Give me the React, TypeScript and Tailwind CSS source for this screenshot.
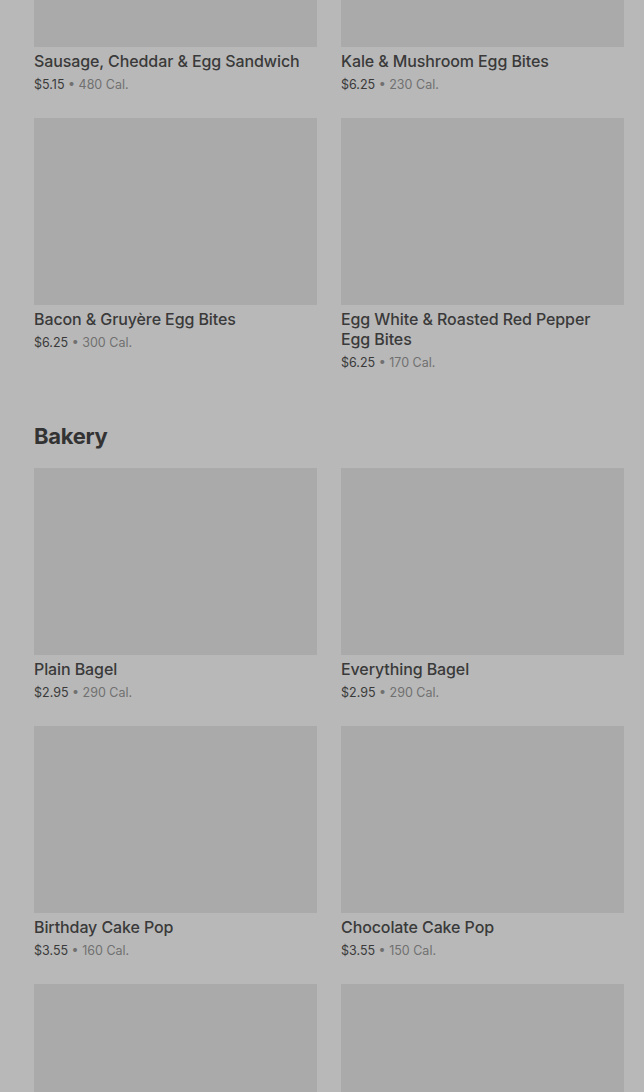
import React from "react";

type Item = { name: string; price: string; cal: string };

const breakfast: Item[] = [
  { name: "Sausage, Cheddar & Egg Sandwich", price: "$5.15", cal: "480 Cal." },
  { name: "Kale & Mushroom Egg Bites", price: "$6.25", cal: "230 Cal." },
  { name: "Bacon & Gruyère Egg Bites", price: "$6.25", cal: "300 Cal." },
  { name: "Egg White & Roasted Red Pepper Egg Bites", price: "$6.25", cal: "170 Cal." },
];

const bakery: Item[] = [
  { name: "Plain Bagel", price: "$2.95", cal: "290 Cal." },
  { name: "Everything Bagel", price: "$2.95", cal: "290 Cal." },
  { name: "Birthday Cake Pop", price: "$3.55", cal: "160 Cal." },
  { name: "Chocolate Cake Pop", price: "$3.55", cal: "150 Cal." },
];

function ItemCard({ item }: { item: Item }) {
  return (
    <div>
      <div className="h-[187px] w-full bg-[#aaaaaa]" />
      <p className="mt-[4px] pr-[12px] text-[16px] leading-[20px] font-medium tracking-[-0.1px] text-[#3a3a3a]">
        {item.name}
      </p>
      <p className="mt-[4px] text-[12.5px] leading-[19px] text-[#707070]">
        <span className="text-[#3a3a3a]">{item.price}</span> • {item.cal}
      </p>
    </div>
  );
}

function Grid({ items, more = 0 }: { items: Item[]; more?: number }) {
  return (
    <div className="grid grid-cols-2 gap-x-[24px] gap-y-[24px]">
      {items.map((it) => (
        <ItemCard key={it.name} item={it} />
      ))}
      {/* next row, only the photos are in view */}
      {Array.from({ length: more }).map((_, i) => (
        <div key={i} className="h-[187px] w-full bg-[#aaaaaa]" />
      ))}
    </div>
  );
}

export default function App() {
  return (
    <div
      className="h-[1092px] overflow-hidden bg-[#b8b8b8]"
      style={{ fontFamily: "Inter, 'Noto Sans', sans-serif" }}
    >
      <div className="-mt-[140px] pl-[34px] pr-[20px]">
        <Grid items={breakfast} />
        <section className="mt-[50px]">
          <h2 className="mb-[18px] text-[22px] leading-[28px] font-bold tracking-[-0.3px] text-[#333333]">
            Bakery
          </h2>
          <Grid items={bakery} more={2} />
        </section>
      </div>
    </div>
  );
}
